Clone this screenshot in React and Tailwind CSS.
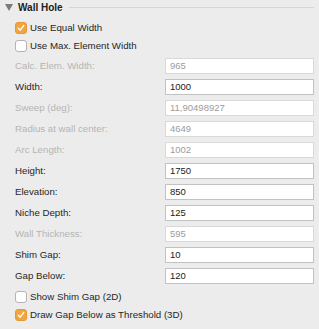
import React from "react";

const rows = [
  { label: "Calc. Elem. Width:", value: "965", disabled: true },
  { label: "Width:", value: "1000" },
  { label: "Sweep (deg):", value: "11,90498927", disabled: true },
  { label: "Radius at wall center:", value: "4649", disabled: true },
  { label: "Arc Length:", value: "1002", disabled: true },
  { label: "Height:", value: "1750" },
  { label: "Elevation:", value: "850" },
  { label: "Niche Depth:", value: "125" },
  { label: "Wall Thickness:", value: "595", disabled: true },
  { label: "Shim Gap:", value: "10" },
  { label: "Gap Below:", value: "120" },
];

const Check = ({ checked, label }) => (
  <div className="flex h-[18px] items-center gap-[3px] pl-[15px]">
    {checked ? (
      <div className="flex h-[12px] w-[12px] items-center justify-center rounded-[3px] border border-[#e39a35] bg-[#f2a53c]">
        <svg width="8" height="8" viewBox="0 0 8 8">
          <path d="M1.3 4.3 L3.2 6.2 L6.7 1.6" fill="none" stroke="white" strokeWidth="1.4" strokeLinecap="round" strokeLinejoin="round" />
        </svg>
      </div>
    ) : (
      <div className="h-[12px] w-[12px] rounded-[3px] border border-[#b3b3b3] bg-white" />
    )}
    <span className="text-[9.7px] leading-none text-[#262626]">{label}</span>
  </div>
);

export default function App() {
  return (
    <div className="h-[329px] w-[319px] overflow-hidden bg-[#ececec] font-['Liberation_Sans',Arial,sans-serif]">
      {/* header */}
      <div className="flex h-[15px] items-center pr-[5px]">
        <svg width="8" height="7" viewBox="0 0 8 7" className="ml-[5px]">
          <path d="M0 0 H8 L4 7 Z" fill="#7b7b7b" />
        </svg>
        <span className="ml-[5px] text-[10px] font-bold leading-none text-[#222]">Wall Hole</span>
        <div className="ml-[6px] h-px flex-1 bg-[#d6d6d6]" />
      </div>

      <div className="mt-[4px]">
        <Check checked label="Use Equal Width" />
        <Check label="Use Max. Element Width" />
      </div>

      <div className="mt-[3px] flex flex-col gap-[5px] pl-[15px] pr-[5px]">
        {rows.map((r) => (
          <div key={r.label} className="flex h-[16px] items-center">
            <span className={`w-[150px] text-[9.7px] leading-none ${r.disabled ? "text-[#b5b5b5]" : "text-[#262626]"}`}>
              {r.label}
            </span>
            <div
              className={`flex h-[16px] flex-1 items-center border bg-white pl-[4px] text-[9.5px] leading-none ${
                r.disabled ? "border-[#d9d9d9] text-[#9c9c9c]" : "border-[#c2c2c2] text-[#1a1a1a]"
              }`}
            >
              {r.value}
            </div>
          </div>
        ))}
      </div>

      <div className="mt-[4px]">
        <Check label="Show Shim Gap (2D)" />
        <Check checked label="Draw Gap Below as Threshold (3D)" />
      </div>
    </div>
  );
}
